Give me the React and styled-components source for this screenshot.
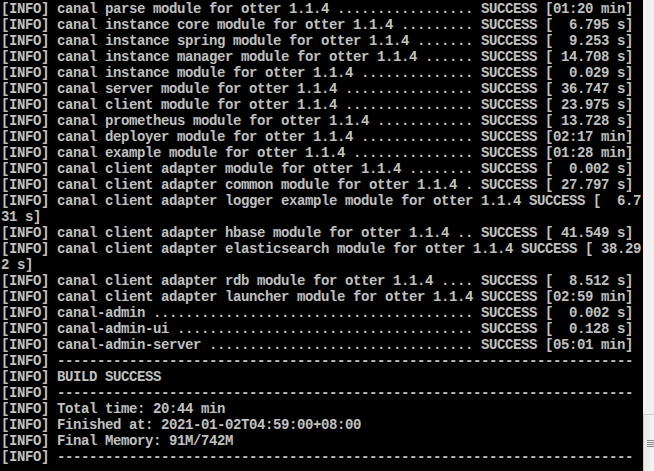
import React from 'react';
import styled, { createGlobalStyle } from 'styled-components';

const COLS = 80;

const GlobalStyle = createGlobalStyle`
  html, body {
    margin: 0;
    padding: 0;
    background: #000;
    overflow: hidden;
  }
`;

const Window = styled.div`
  display: flex;
  width: 654px;
  height: 471px;
  background: #000;
`;

const Console = styled.div`
  width: 643px;
  height: 471px;
  padding: 1px 0 0 1px;
  box-sizing: border-box;
  overflow: hidden;
  background: #000;
`;

const Line = styled.div`
  height: 16px;
  line-height: 16px;
  white-space: pre;
  font-family: 'Liberation Mono', 'DejaVu Sans Mono', monospace;
  font-size: 14px;
  font-weight: bold;
  letter-spacing: -0.4px;
  color: #c0c0c0;
`;

const Scrollbar = styled.div`
  display: flex;
  flex-direction: column;
  width: 11px;
  height: 471px;
  background: #f0f0f0;
`;

const Track = styled.div`
  flex: 1;
`;

const Thumb = styled.div`
  display: flex;
  flex-direction: column;
  justify-content: center;
  gap: 1px;
  height: 56px;
  border-top: 1px solid #cdcdcd;
  border-left: 1px solid #cdcdcd;
  background: linear-gradient(to right, #e8e8e8, #f4f4f4);
  padding-left: 3px;
`;

const Grip = styled.span`
  display: block;
  width: 7px;
  height: 1px;
  background: #8a8a8a;
`;

const modules = [
  ['canal parse module for otter 1.1.4', '01:20 min'],
  ['canal instance core module for otter 1.1.4', '  6.795 s'],
  ['canal instance spring module for otter 1.1.4', '  9.253 s'],
  ['canal instance manager module for otter 1.1.4', ' 14.708 s'],
  ['canal instance module for otter 1.1.4', '  0.029 s'],
  ['canal server module for otter 1.1.4', ' 36.747 s'],
  ['canal client module for otter 1.1.4', ' 23.975 s'],
  ['canal prometheus module for otter 1.1.4', ' 13.728 s'],
  ['canal deployer module for otter 1.1.4', '02:17 min'],
  ['canal example module for otter 1.1.4', '01:28 min'],
  ['canal client adapter module for otter 1.1.4', '  0.002 s'],
  ['canal client adapter common module for otter 1.1.4', ' 27.797 s'],
  ['canal client adapter logger example module for otter 1.1.4', '  6.731 s'],
  ['canal client adapter hbase module for otter 1.1.4', ' 41.549 s'],
  ['canal client adapter elasticsearch module for otter 1.1.4', ' 38.292 s'],
  ['canal client adapter rdb module for otter 1.1.4', '  8.512 s'],
  ['canal client adapter launcher module for otter 1.1.4', '02:59 min'],
  ['canal-admin', '  0.002 s'],
  ['canal-admin-ui', '  0.128 s'],
  ['canal-admin-server', '05:01 min'],
];

// maven reactor summary: name, dots up to column 59, then status
function reactorLine(name, time) {
  let s = '[INFO] ' + name;
  if (s.length < 58) {
    s += ' ';
    while (s.length < 59) s += '.';
  }
  return s + ' SUCCESS [' + time + ']';
}

const dashes = '[INFO] ' + '-'.repeat(72);

const output = [
  ...modules.map(([name, time]) => reactorLine(name, time)),
  dashes,
  '[INFO] BUILD SUCCESS',
  dashes,
  '[INFO] Total time: 20:44 min',
  '[INFO] Finished at: 2021-01-02T04:59:00+08:00',
  '[INFO] Final Memory: 91M/742M',
  dashes,
];

// console wraps hard at 80 columns
const rows = output.flatMap(text => {
  const parts = [];
  for (let i = 0; i < text.length; i += COLS) parts.push(text.slice(i, i + COLS));
  return parts;
});

export default function App() {
  return (
    <>
      <GlobalStyle />
      <Window>
        <Console>
          {rows.map((row, i) => (
            <Line key={i}>{row}</Line>
          ))}
        </Console>
        <Scrollbar>
          <Track />
          <Thumb>
            <Grip />
            <Grip />
            <Grip />
            <Grip />
          </Thumb>
        </Scrollbar>
      </Window>
    </>
  );
}
